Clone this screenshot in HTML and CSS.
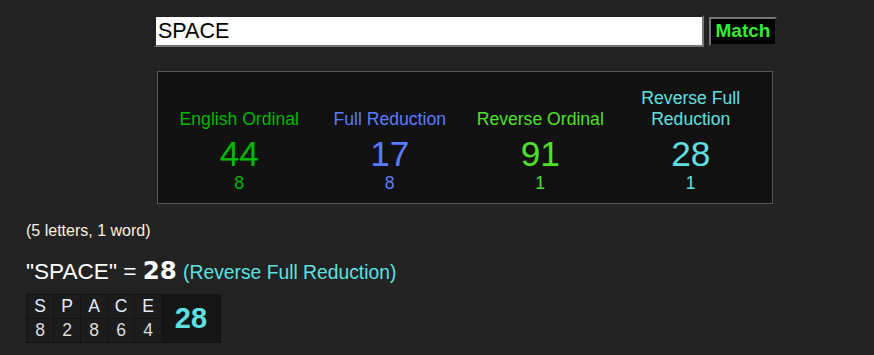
FILE: index.html
```html
<!DOCTYPE html>
<html lang="en">
<head>
<meta charset="utf-8">
<title>Gematria – SPACE</title>
<link rel="stylesheet" href="styles.css">
</head>
<body>
<div class="page">
  <form class="search">
    <input class="search-input" type="text" value="SPACE">
    <button class="match-btn" type="button">Match</button>
  </form>

  <div class="panel">
    <div class="cipher c-eo">
      <div class="c-label">English Ordinal</div>
      <div class="c-value">44</div>
      <div class="c-reduced">8</div>
    </div>
    <div class="cipher c-fr">
      <div class="c-label">Full Reduction</div>
      <div class="c-value">17</div>
      <div class="c-reduced">8</div>
    </div>
    <div class="cipher c-ro">
      <div class="c-label">Reverse Ordinal</div>
      <div class="c-value">91</div>
      <div class="c-reduced">1</div>
    </div>
    <div class="cipher c-rfr">
      <div class="c-label">Reverse Full Reduction</div>
      <div class="c-value">28</div>
      <div class="c-reduced">1</div>
    </div>
  </div>

  <div class="details">
    <div class="count">(5 letters, 1 word)</div>
    <div class="result">"SPACE" = <span class="result-num">28</span> <span class="result-cipher">(Reverse Full Reduction)</span></div>
    <table class="breakdown">
      <tr class="letters">
        <td>S</td><td>P</td><td>A</td><td>C</td><td>E</td>
        <td class="total" rowspan="2">28</td>
      </tr>
      <tr class="values">
        <td>8</td><td>2</td><td>8</td><td>6</td><td>4</td>
      </tr>
    </table>
  </div>
</div>
</body>
</html>
```

FILE: styles.css
```css
html, body {
  margin: 0;
  padding: 0;
  background: #222222;
}

body {
  font-family: "Liberation Sans", Arial, sans-serif;
  color: #ffffff;
}

.page {
  padding-top: 15px;
}

.search {
  display: flex;
  align-items: center;
  gap: 5px;
  margin: 0 0 0 154px;
}

.search-input {
  box-sizing: border-box;
  width: 550px;
  height: 32px;
  margin: 0;
  padding: 0 0 0 2px;
  border: 2px inset #767676;
  background: #ffffff;
  color: #000000;
  font-family: "Liberation Sans", Arial, sans-serif;
  font-size: 21.5px;
}

.match-btn {
  box-sizing: border-box;
  width: 68px;
  height: 29px;
  margin: 0;
  padding: 0;
  border: 2px outset #777777;
  background: #000000;
  color: #33ee33;
  font-family: "Liberation Sans", Arial, sans-serif;
  font-weight: bold;
  font-size: 19px;
}

.panel {
  box-sizing: border-box;
  width: 616px;
  height: 133px;
  margin: 24px 0 0 157px;
  padding: 0 6px 10px;
  border: 1px solid #555555;
  background: #111111;
  display: grid;
  grid-template-columns: repeat(4, 1fr);
  align-items: end;
  text-align: center;
}

.c-label {
  font-size: 17.6px;
  line-height: 21px;
  margin-bottom: 4px;
  padding: 0 4px;
}

.c-value {
  font-size: 35.2px;
  line-height: 40px;
}

.c-reduced {
  font-size: 17.6px;
  line-height: 20px;
  margin-top: -1px;
}

.c-eo { color: #00b800; }
.c-fr { color: #5a7bff; }
.c-ro { color: #4ee02a; }
.c-rfr { color: #5fe0e0; }

.details {
  padding-left: 26px;
}

.count {
  margin-top: 18px;
  font-size: 16px;
  line-height: 18px;
  color: #fff0dc;
}

.result {
  margin-top: 18px;
  font-size: 22.6px;
  line-height: 28px;
  color: #ffffff;
}

.result-num {
  font-family: "DejaVu Sans", sans-serif;
  font-weight: bold;
  font-size: 24.5px;
  line-height: 1;
}

.result-cipher {
  font-size: 19.3px;
  line-height: 1;
  color: #5fe0e0;
}

.breakdown {
  margin-top: 8px;
  border-collapse: separate;
  border-spacing: 1px;
  background: #131313;
}

.breakdown td {
  box-sizing: border-box;
  width: 26px;
  height: 23px;
  padding: 0;
  text-align: center;
  font-size: 17.5px;
  background: #1c1c1c;
}

.letters td {
  color: #e2ecff;
}

.values td {
  color: #dddddd;
}

.breakdown td.total {
  width: 58px;
  background: #151515;
  color: #5fe0e0;
  font-weight: bold;
  font-size: 29px;
}
```
